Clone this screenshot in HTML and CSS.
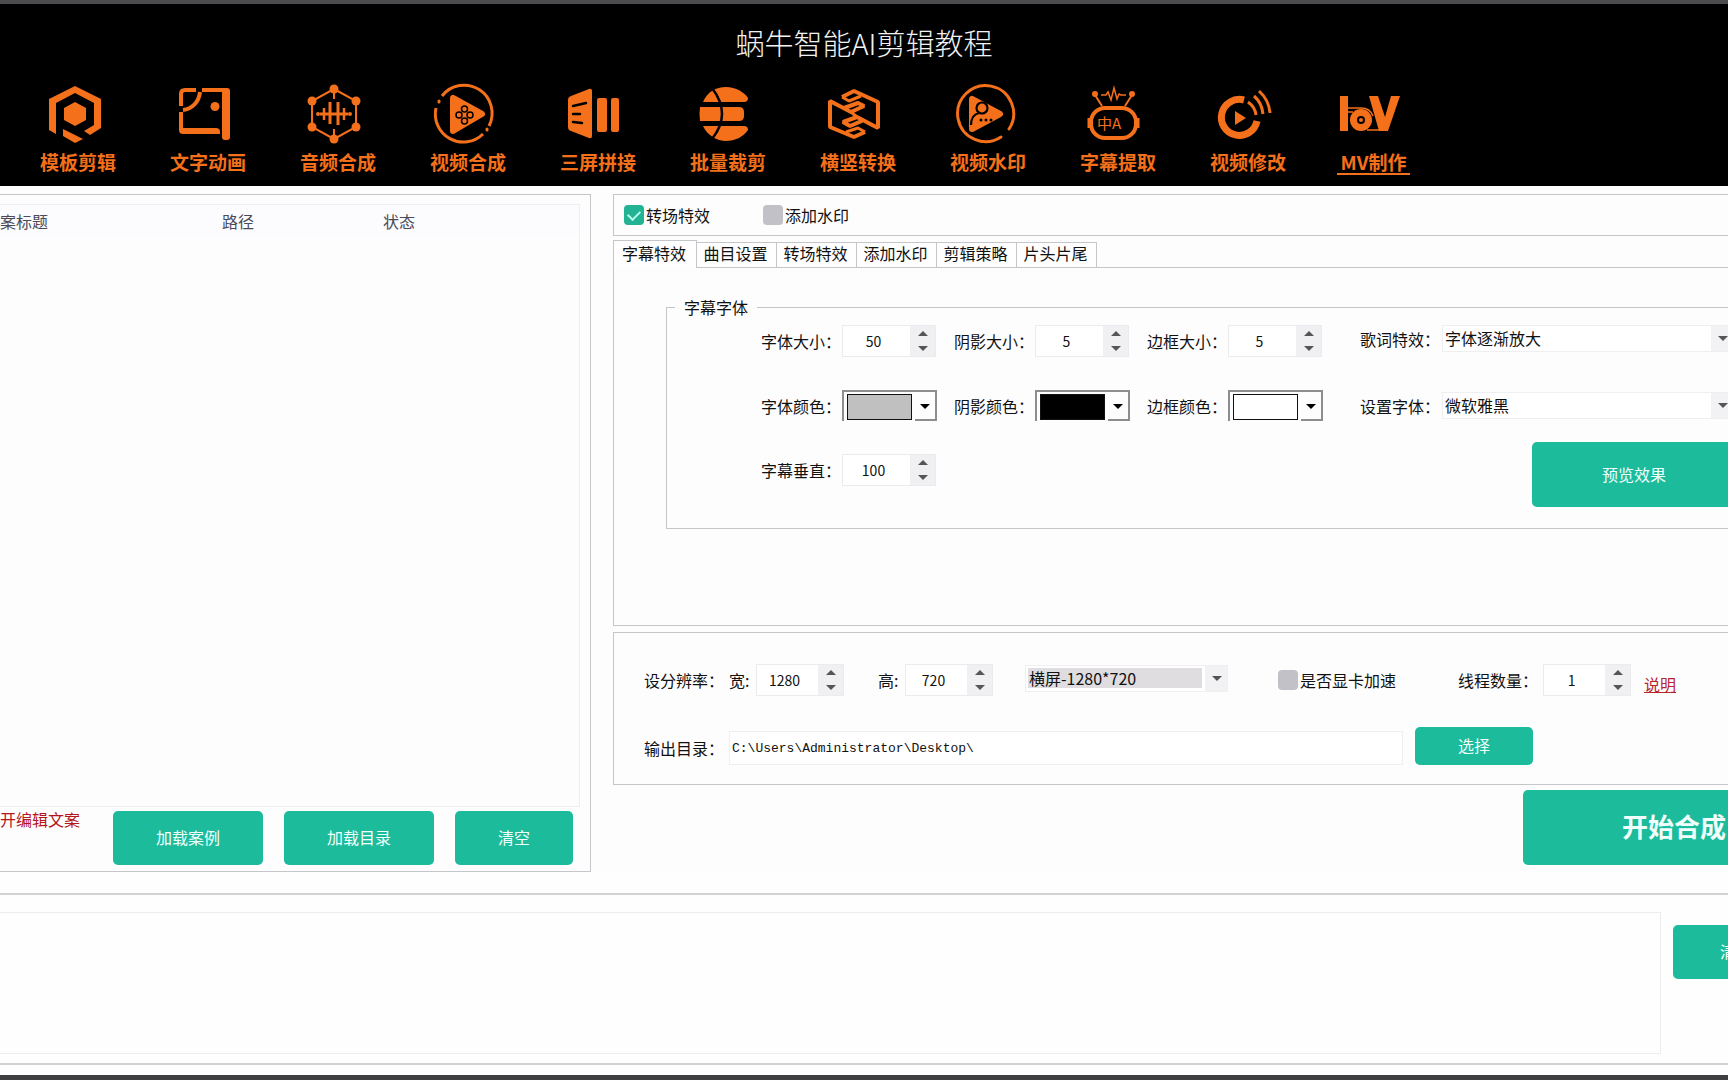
FILE: index.html
```html
<!DOCTYPE html>
<html lang="zh-CN">
<head>
<meta charset="utf-8">
<meta name="viewport" content="width=device-width, initial-scale=1">
<title>蜗牛智能AI剪辑教程</title>
<link rel="stylesheet" href="styles.css">
</head>
<body>
<div class="app">
  <header class="header">
    <h1 class="title">蜗牛智能AI剪辑教程</h1>
    <nav class="nav">
      <a class="nav-item" href="#template">
        <svg class="nav-icon" viewBox="0 0 60 60" fill="currentColor" aria-hidden="true"><path d="M5 46V15L31 2l26 13v29l-11 7-6-4 10-6V19L31 9 12 19v31z"/><path d="M31 18l11 6v12l-11 6-11-6V24z"/><path d="M19 45l20 10-8 4-12-7z"/></svg>
        <span class="nav-label">模板剪辑</span>
      </a>
      <a class="nav-item" href="#text">
        <svg class="nav-icon" viewBox="0 0 60 60" fill="none" stroke="currentColor" stroke-width="4" aria-hidden="true"><path d="M22 6H11Q7 6 7 10v12M28 6h23"/><path d="M26 8C25 18 18 25 9 26"/><path d="M5 28h4v16h33q4 0 4 4v2H9q-4 0-4-4zM48 4h5q3 0 3 3v46q0 3-3 3h-2q-3 0-3-3z" fill="currentColor" stroke="none"/><circle cx="41" cy="22.500" r="4.500" fill="currentColor" stroke="none"/></svg>
        <span class="nav-label">文字动画</span>
      </a>
      <a class="nav-item" href="#audio">
        <svg class="nav-icon" viewBox="0 0 60 60" fill="none" stroke="currentColor" stroke-width="2" aria-hidden="true"><path d="M30 5l22 12v26L30 55 8 43V17zM30 5v10M30 45v10"/><path d="M16 30h28M26 18v22M34 18v23" stroke-width="3"/><path d="M20 24v12M40 24v12" stroke-width="2.500"/><g fill="currentColor" stroke="none"><circle cx="14" cy="30" r="2"/><circle cx="46" cy="30" r="2"/><circle cx="30" cy="5" r="4.500"/><circle cx="52" cy="17" r="4.500"/><circle cx="52" cy="43" r="4.500"/><circle cx="30" cy="55" r="4.500"/><circle cx="8" cy="17" r="4.500"/><circle cx="8" cy="43" r="4.500"/></g></svg>
        <span class="nav-label">音频合成</span>
      </a>
      <a class="nav-item" href="#video">
        <svg class="nav-icon" viewBox="0 0 60 60" fill="none" stroke="currentColor" stroke-width="3" aria-hidden="true"><path d="M8 12A28 28 0 0 1 55 42M49 50A28 28 0 0 1 2 24"/><path d="M5 17v1M53 45v1" stroke-width="3" stroke-linecap="round"/><path d="M19 14v33l29-17z" fill="currentColor" stroke-width="6" stroke-linejoin="round"/><g stroke="#000" stroke-width="1.500"><circle cx="30.500" cy="25" r="3"/><circle cx="25" cy="31" r="3"/><circle cx="36" cy="31" r="3"/><circle cx="30.500" cy="37" r="3"/></g></svg>
        <span class="nav-label">视频合成</span>
      </a>
      <a class="nav-item" href="#split">
        <svg class="nav-icon" viewBox="0 0 60 60" fill="currentColor" aria-hidden="true"><path d="M7 12L25 5q3-1 3 2v45q0 3-3 2L7 47q-3-1-3-4V16q0-3 3-4z"/><rect x="33" y="14" width="10" height="34" rx="2"/><rect x="47" y="14" width="8" height="34" rx="2"/><path d="M9 22l13-3M9 30h7M9 38l9 1" stroke="#000" stroke-width="2.500" stroke-linecap="round"/></svg>
        <span class="nav-label">三屏拼接</span>
      </a>
      <a class="nav-item" href="#crop">
        <svg class="nav-icon" viewBox="0 0 60 60" fill="currentColor" aria-hidden="true"><path d="M9 18C13 8 22 3 32 3s18 5 22 11q0 4-4 4z"/><path d="M6 23h39q5 0 5 5v4q0 5-5 5H6q-1-7 0-14z"/><path d="M9 42h41q4 0 4 4C49 53 41 57 32 57S13 51 9 42z"/><path d="M18 4q20 26 0 51" fill="none" stroke="#000" stroke-width="2.500"/></svg>
        <span class="nav-label">批量裁剪</span>
      </a>
      <a class="nav-item" href="#rotate">
        <svg class="nav-icon" viewBox="0 0 60 60" fill="none" stroke="currentColor" stroke-width="4" stroke-linejoin="bevel" aria-hidden="true"><path d="M18 13L30 7l24 11v26L33 33l-14 5 7 4 14-6"/><path d="M41 48l-11 5L6 43V17l21 11 13-6-6-3-14 5"/><path d="M18 13l7 4 12-5M41 48l-7-4-12 4M27 28l6 5" stroke-width="3"/></svg>
        <span class="nav-label">横竖转换</span>
      </a>
      <a class="nav-item" href="#watermark">
        <svg class="nav-icon" viewBox="0 0 60 60" fill="none" stroke="currentColor" stroke-width="3" aria-hidden="true"><path d="M55 45A28 28 0 1 0 47 53" stroke-linecap="round"/><path d="M18 15v30l28-15z" fill="currentColor" stroke-width="6" stroke-linejoin="round"/><g stroke="#000" stroke-width="2.200"><circle cx="28" cy="24" r="5.500"/><path d="M17 41q0-10 8-12"/></g><g fill="#000" stroke="none"><circle cx="27" cy="36" r="1.500"/><circle cx="32" cy="36" r="1.500"/><circle cx="37" cy="36" r="1.500"/></g></svg>
        <span class="nav-label">视频水印</span>
      </a>
      <a class="nav-item" href="#subtitle">
        <svg class="nav-icon" viewBox="0 0 60 60" fill="none" stroke="currentColor" stroke-width="2" aria-hidden="true"><rect x="7" y="24" width="45" height="30" rx="14" stroke-width="4"/><path d="M5 34v10M54 34v10" stroke-width="3"/><path d="M18 22l-7-11M41 22l7-11"/><circle cx="11" cy="10" r="2" fill="currentColor"/><circle cx="48" cy="10" r="2" fill="currentColor"/><path d="M17 11h5l2-3 3 8 3-12 3 11 2-5 2 1h5" stroke-width="1.500"/><text class="icon-text" x="13" y="45" fill="currentColor" stroke="none">中A</text></svg>
        <span class="nav-label">字幕提取</span>
      </a>
      <a class="nav-item" href="#modify">
        <svg class="nav-icon" viewBox="0 0 60 60" fill="none" stroke="currentColor" stroke-width="7" aria-hidden="true"><path d="M30 16A18 18 0 1 0 43 37"/><path d="M21 27v14l11-7z" fill="currentColor" stroke="none"/><path d="M34 18q7 5 8 13M40 12q8 7 9 18M45 7q10 9 11 22" stroke-width="3"/></svg>
        <span class="nav-label">视频修改</span>
      </a>
      <a class="nav-item nav-item-current" href="#mv" aria-current="page">
        <svg class="nav-icon" viewBox="0 0 60 60" fill="currentColor" aria-hidden="true"><path d="M-1 12h8v35h-8zM28 12h9l7 21 6-21h9L47 47h-9z"/><path d="M7 24h13q9 0 12 8M7 28h5M26 46h14" fill="none" stroke="currentColor" stroke-width="1.500"/><circle cx="20" cy="36" r="7.500" fill="none" stroke="currentColor" stroke-width="7"/><circle cx="20" cy="36" r="2"/></svg>
        <span class="nav-label">MV制作</span>
      </a>
    </nav>
  </header>

  <main class="main">
    <section class="files">
      <div class="file-list">
        <table class="file-table">
          <thead><tr><th class="col-title">案标题</th><th class="col-path">路径</th><th>状态</th></tr></thead>
        </table>
      </div>
      <div class="file-actions">
        <span class="hint">开编辑文案</span>
        <button class="btn btn-mid" type="button">加载案例</button>
        <button class="btn btn-mid" type="button">加载目录</button>
        <button class="btn btn-small" type="button">清空</button>
      </div>
    </section>

    <section class="settings">
      <div class="panel options">
        <label class="check"><input type="checkbox" checked>转场特效</label>
        <label class="check"><input type="checkbox">添加水印</label>
      </div>

      <div class="tabs" role="tablist">
        <button class="tab tab-current" type="button" role="tab" aria-selected="true">字幕特效</button>
        <button class="tab" type="button" role="tab">曲目设置</button>
        <button class="tab" type="button" role="tab">转场特效</button>
        <button class="tab" type="button" role="tab">添加水印</button>
        <button class="tab" type="button" role="tab">剪辑策略</button>
        <button class="tab" type="button" role="tab">片头片尾</button>
      </div>
      <div class="tab-page">
        <fieldset class="group">
          <legend>字幕字体</legend>
          <div class="fields">
            <label for="font-size">字体大小：</label>
            <span class="spin"><input id="font-size" type="number" value="50"><span class="steps"><button class="up" type="button" aria-label="增加"></button><button class="down" type="button" aria-label="减少"></button></span></span>
            <label for="shadow-size">阴影大小：</label>
            <span class="spin"><input id="shadow-size" type="number" value="5"><span class="steps"><button class="up" type="button" aria-label="增加"></button><button class="down" type="button" aria-label="减少"></button></span></span>
            <label for="border-size">边框大小：</label>
            <span class="spin"><input id="border-size" type="number" value="5"><span class="steps"><button class="up" type="button" aria-label="增加"></button><button class="down" type="button" aria-label="减少"></button></span></span>
            <label class="raised" for="lyric-effect">歌词特效：</label>
            <span class="combo raised"><select id="lyric-effect"><option>字体逐渐放大</option></select></span>

            <label for="font-color">字体颜色：</label>
            <span class="color"><input id="font-color" type="color" value="#c0c0c0"><span class="color-drop"></span></span>
            <label for="shadow-color">阴影颜色：</label>
            <span class="color"><input id="shadow-color" type="color" value="#000000"><span class="color-drop"></span></span>
            <label for="border-color">边框颜色：</label>
            <span class="color"><input id="border-color" type="color" value="#ffffff"><span class="color-drop"></span></span>
            <label for="font-name">设置字体：</label>
            <span class="combo"><select id="font-name"><option>微软雅黑</option></select></span>

            <label for="vertical">字幕垂直：</label>
            <span class="spin"><input id="vertical" type="number" value="100"><span class="steps"><button class="up" type="button" aria-label="增加"></button><button class="down" type="button" aria-label="减少"></button></span></span>
            <button class="btn btn-preview" type="button">预览效果</button>
          </div>
        </fieldset>
      </div>

      <div class="panel output">
        <div class="output-row">
          <span class="output-name">设分辨率：</span>
          <label class="short" for="width">宽:</label>
          <span class="spin spin-narrow"><input id="width" type="number" value="1280"><span class="steps"><button class="up" type="button" aria-label="增加"></button><button class="down" type="button" aria-label="减少"></button></span></span>
          <label class="short height-label" for="height">高:</label>
          <span class="spin spin-narrow"><input id="height" type="number" value="720"><span class="steps"><button class="up" type="button" aria-label="增加"></button><button class="down" type="button" aria-label="减少"></button></span></span>
          <span class="combo combo-size"><select aria-label="屏幕方向"><option>横屏-1280*720</option></select></span>
          <label class="check gpu"><input type="checkbox">是否显卡加速</label>
          <label class="output-name" for="threads">线程数量：</label>
          <span class="spin spin-narrow"><input id="threads" type="number" value="1"><span class="steps"><button class="up" type="button" aria-label="增加"></button><button class="down" type="button" aria-label="减少"></button></span></span>
          <a class="help" href="#help">说明</a>
        </div>
        <div class="output-row">
          <label class="output-name" for="folder">输出目录：</label>
          <input class="folder" id="folder" type="text" value="C:\Users\Administrator\Desktop\">
          <button class="btn btn-choose" type="button">选择</button>
        </div>
      </div>
      <button class="btn btn-start" type="button">开始合成</button>
    </section>
  </main>

  <footer class="log">
    <textarea class="log-text" aria-label="日志" readonly></textarea>
    <button class="btn btn-log" type="button">清空</button>
  </footer>
</div>
</body>
</html>
```
FILE: styles.css
```css
* { box-sizing: border-box; }

body {
  margin: 0;
  background: #fefefe;
  color: #111;
  font: 16px/24px "Noto Sans CJK SC", "Liberation Sans", sans-serif;
}

button, input, select, textarea { font: inherit; color: inherit; }

.app {
  display: flex;
  flex-direction: column;
  min-height: 100vh;
  overflow: hidden;
  border-top: 4px solid #4c4b4e;
  border-bottom: 5px solid #3f3e40;
}

/* Header */
.header { background: #000; height: 182px; padding-top: 18px; }

.title {
  margin: 0 0 22px;
  color: #f2f2f2;
  font-size: 29px;
  line-height: 40px;
  font-weight: 300;
  text-align: center;
}

.nav { display: flex; gap: 54px; padding-left: 40px; }

.nav-item {
  display: flex;
  flex-direction: column;
  flex: none;
  width: 76px;
  color: #f4701a;
  text-decoration: none;
}

.nav-icon { width: 68px; height: 60px; overflow: visible; }
.nav-label { margin-top: 6px; font-size: 19px; line-height: 23px; font-weight: 700; white-space: nowrap; }
.nav-item-current { width: 73px; margin-left: -3px; }
.nav-item-current .nav-label { border-bottom: 2px solid; text-align: center; }
.icon-text { font: 400 15px "Noto Sans CJK SC", sans-serif; }

/* Main area */
.main { display: flex; gap: 22px; padding-top: 8px; background: #fefdfe; }

.files {
  display: flex;
  flex-direction: column;
  flex: none;
  width: 591px;
  padding: 9px 10px 6px 0;
  border: 1px solid #c6c5c9;
  border-left: 0;
}

.file-list { flex: 1; border: 1px solid #efeef2; border-left: 0; }
.file-table { width: 100%; border-collapse: collapse; table-layout: fixed; background: #fcfbfe; }
.file-table th { height: 32px; padding: 0; color: #4b4b58; font-weight: 400; text-align: left; }
.file-table .col-title { width: 222px; }
.file-table .col-path { width: 161px; }

.file-actions { display: flex; gap: 21px; padding-top: 4px; }
.hint { width: 92px; color: #b3151b; line-height: 16px; }

.btn {
  flex: none;
  padding: 0;
  border: 0;
  border-radius: 5px;
  background: #1cbb9c;
  color: #f0fffb;
}

.file-actions .btn, .btn-choose { padding-bottom: 2px; }
.btn-mid { width: 150px; height: 54px; }
.btn-small { width: 118px; height: 54px; }

/* Settings column */
.settings { flex: 1; min-width: 0; display: flex; flex-direction: column; }
.panel { border: 1px solid #c6c5c9; border-right: 0; }

.options { display: flex; align-items: center; gap: 51px; height: 42px; padding-left: 10px; }
.check { display: flex; align-items: center; gap: 2px; white-space: nowrap; }
.options .check { width: 88px; }

.check input {
  appearance: none;
  width: 20px;
  height: 20px;
  margin: 0;
  border-radius: 4px;
  background: #c3c1c8;
  display: grid;
  place-items: center;
}

.check input:checked { background: #22b394; }
.check input:checked::after {
  content: "";
  width: 10px;
  height: 6px;
  margin-bottom: 3px;
  border: solid #b9ffee;
  border-width: 0 0 2px 2px;
  transform: rotate(-45deg);
}

.tabs { display: flex; align-items: flex-end; margin-top: 4px; border-bottom: 1px solid #c6c5c9; }

.tab {
  width: 80px;
  height: 25px;
  padding: 0 2px 4px 0;
  border: 1px solid #c6c5c9;
  border-width: 1px 1px 0 0;
  background: #fefefe;
  line-height: 20px;
  white-space: nowrap;
}

.tab-current { width: 84px; height: 28px; margin-bottom: -1px; border-left-width: 1px; }

.tab-page {
  height: 358px;
  padding: 29px 0 0 52px;
  border: solid #c6c5c9;
  border-width: 0 0 1px 1px;
}

.group {
  min-width: 0;
  margin: 0;
  padding: 0 0 34px 94px;
  border: 1px solid #c6c5c9;
  border-right: 0;
}

.group legend { margin-left: -86px; padding: 0 9px; line-height: 20px; }

.fields {
  display: grid;
  grid-template-columns: 81px 112px 81px 112px 81px 132px 82px 1fr;
  grid-template-rows: 48px 81px 48px;
  align-items: center;
  white-space: nowrap;
}

.raised { margin-bottom: 5px; }

/* Number boxes */
.spin { display: flex; width: 94px; height: 32px; border: 1px solid #ebeaee; background: #fff; }

.spin input {
  appearance: textfield;
  flex: 1;
  min-width: 0;
  padding: 0 6px 0 0;
  border: 0;
  background: none;
  font-size: 14px;
  text-align: center;
}

.spin input::-webkit-inner-spin-button { display: none; }
.spin-narrow { flex: none; width: 88px; }
.steps { display: flex; flex-direction: column; width: 25px; background: #f0eff2; }
.steps button { flex: 1; display: grid; place-items: center; padding: 0; border: 0; background: none; }
.steps button::before { content: ""; border: 5px solid transparent; }
.steps .up::before { border-top: 0; border-bottom-color: #555457; }
.steps .down::before { border-bottom: 0; border-top-color: #555457; }

/* Drop-downs */
.combo { display: grid; width: 292px; height: 27px; border: 1px solid #efeef1; background: linear-gradient(#f2f1f4, #f2f1f4) right / 22px 100% no-repeat #fff; align-items: center; }

.combo::after {
  content: "";
  grid-area: 1 / 1;
  justify-self: end;
  margin-right: 5px;
  border: 5px solid transparent;
  border-bottom: 0;
  border-top-color: #555457;
  pointer-events: none;
}

.combo select {
  grid-area: 1 / 1;
  appearance: none;
  width: 100%;
  height: 25px;
  padding: 0 2px 2px;
  border: 0;
  background: none;
}

.combo-size { flex: none; width: 203px; margin: 0 0 4px 32px; }
.combo-size select { width: 174px; height: 20px; margin-left: 2px; padding: 0 1px; background: #dfdde0; line-height: 18px; }

/* Colour pickers */
.color {
  display: flex;
  width: 95px;
  height: 31px;
  padding: 2px 0 0 3px;
  border: 2px solid #8d8c8f;
  border-bottom: 0;
}

.color input {
  appearance: none;
  width: 65px;
  height: 26px;
  padding: 0;
  border: 1px solid #111;
  background: none;
}

.color input::-webkit-color-swatch-wrapper { padding: 0; }
.color input::-webkit-color-swatch { border: 0; border-radius: 0; }

.color-drop {
  display: grid;
  place-items: center;
  flex: 1;
  margin-left: 3px;
  border-bottom: 2px solid #8d8c8f;
}

.color-drop::before { content: ""; border: 5px solid transparent; border-bottom: 0; border-top-color: #000; }

.btn-preview { grid-column: 7 / -1; width: 204px; height: 65px; margin: 8px 0 0 172px; }

/* Output panel */
.output { height: 153px; margin-top: 6px; padding: 30px 0 0 30px; }
.output-row { display: flex; align-items: center; height: 34px; white-space: nowrap; }
.output-row + .output-row { margin-top: 34px; }
.output-name { flex: none; width: 85px; }
.short { flex: none; width: 27px; }
.height-label { margin-left: 34px; }
.gpu { margin: 0 62px 0 50px; }
.help { margin: 8px 0 0 13px; color: #b8262c; }

.folder {
  width: 674px;
  height: 34px;
  padding: 0 2px;
  border: 1px solid #efeef1;
  background: #fff;
  font: 13px "Liberation Mono", monospace;
}

.btn-choose { width: 118px; height: 38px; margin: 0 0 4px 12px; }

.btn-start {
  align-self: flex-end;
  width: 302px;
  height: 75px;
  margin: 5px -97px 7px 0;
  padding-bottom: 4px;
  font-size: 26px;
  font-weight: 700;
}

/* Log area */
.log {
  display: flex;
  align-items: flex-start;
  gap: 12px;
  height: 172px;
  margin-top: 21px;
  padding-top: 17px;
  border: solid #d2d2d3;
  border-width: 2px 0;
}

.log-text {
  flex: 1;
  height: 142px;
  padding: 0;
  border: 1px solid #edecef;
  border-left: 0;
  background: #fefefe;
  resize: none;
}

.btn-log { width: 126px; height: 54px; margin: 13px -71px 0 0; padding-bottom: 2px; }
```
